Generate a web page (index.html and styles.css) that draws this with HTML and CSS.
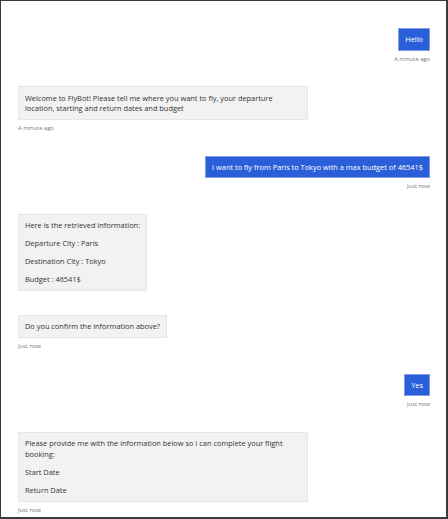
FILE: index.html
```html
<!DOCTYPE html>
<html>
<head>
<meta charset="utf-8">
<link rel="stylesheet" href="styles.css">
</head>
<body>
<div class="chat">
  <div class="msg user">
    <div class="bubble">Hello</div>
    <div class="stamp">A minute ago</div>
  </div>
  <div class="msg bot">
    <div class="bubble"><p>Welcome to FlyBot! Please tell me where you want to fly, your departure location, starting and return dates and budget</p></div>
    <div class="stamp">A minute ago</div>
  </div>
  <div class="msg user">
    <div class="bubble">I want to fly from Paris to Tokyo with a max budget of 46541$</div>
    <div class="stamp">Just now</div>
  </div>
  <div class="msg bot grouped">
    <div class="bubble">
      <p>Here is the retrieved information:</p>
      <p>Departure City : Paris</p>
      <p>Destination City : Tokyo</p>
      <p>Budget : 46541$</p>
    </div>
  </div>
  <div class="msg bot">
    <div class="bubble"><p>Do you confirm the information above?</p></div>
    <div class="stamp">Just now</div>
  </div>
  <div class="msg user">
    <div class="bubble">Yes</div>
    <div class="stamp">Just now</div>
  </div>
  <div class="msg bot">
    <div class="bubble">
      <p>Please provide me with the information below so I can complete your flight booking:</p>
      <p>Start Date</p>
      <p>Return Date</p>
    </div>
    <div class="stamp">Just now</div>
  </div>
</div>
</body>
</html>
```

FILE: styles.css
```css
html, body {
  margin: 0;
  padding: 0;
  background: #ffffff;
}

.chat {
  box-sizing: border-box;
  width: 448px;
  height: 519px;
  overflow: hidden;
  border-style: solid;
  border-color: #3b3b3b;
  border-width: 1px 2px 2px 1px;
  padding: 27px 16px 0 17px;
  display: flex;
  flex-direction: column;
  gap: 22.5px;
  font-family: "Open Sans", "Noto Sans", sans-serif;
  font-size: 7.4px;
  color: #323232;
}

.msg {
  display: flex;
  flex-direction: column;
}

.msg.user {
  align-items: flex-end;
}

.msg.bot {
  align-items: flex-start;
}

.msg.grouped {
  margin-bottom: 1px;
}

.bubble {
  line-height: 10.5px;
  border: 1px solid transparent;
}

.user .bubble {
  background: #2b5fd9;
  border-color: #7f9be6;
  color: #ffffff;
  padding: 5px 6px;
}

.bot .bubble {
  background: #f2f2f2;
  border-color: #e6e6e6;
  padding: 5.5px 6px;
  max-width: 276px;
}

.bot .bubble p {
  margin: 0 0 7.5px 0;
}

.bot .bubble p:last-child {
  margin-bottom: 0;
}

.stamp {
  margin-top: 3px;
  font-size: 5.8px;
  line-height: 10px;
  color: #767676;
}
```
